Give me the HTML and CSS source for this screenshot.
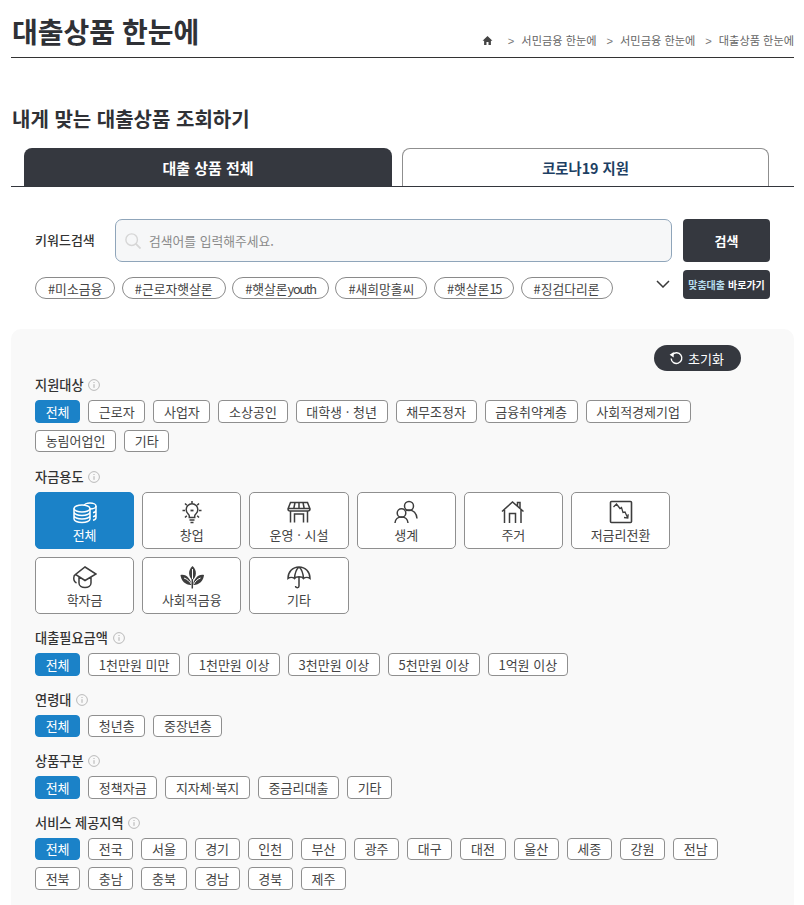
FILE: index.html
```html
<!DOCTYPE html>
<html lang="ko">
<head>
<meta charset="utf-8">
<title>대출상품 한눈에</title>
<link rel="stylesheet" href="styles.css">
</head>
<body>
<svg class="defs" width="0" height="0" aria-hidden="true">
  <symbol id="info" viewBox="0 0 12 12"><circle cx="6" cy="6" r="5.400" fill="none" stroke="#b9b9b9"/><path d="M6 5.200v3.600M6 3v1" stroke="#b0b0b0" fill="none"/></symbol>
</svg>
<div class="page">
  <header class="top">
    <h1 class="title">대출상품 한눈에</h1>
    <nav class="crumbs">
      <svg class="home" viewBox="0 0 12 12"><path d="M6 1 .6 6.200h1.700V11h2.600V7.600h2.200V11h2.600V6.200h1.700z" fill="#444"/></svg>
      <span class="crumb first">서민금융 한눈에</span>
      <span class="crumb">서민금융 한눈에</span>
      <span class="crumb">대출상품 한눈에</span>
    </nav>
  </header>
  <h2 class="subtitle">내게 맞는 대출상품 조회하기</h2>
  <div class="tabs">
    <div class="tab tab-on">대출 상품 전체</div>
    <div class="tab tab-off">코로나19 지원</div>
  </div>
  <section class="search">
    <div class="search-row">
      <div class="search-label">키워드검색</div>
      <div class="search-input">
        <svg class="glass" viewBox="0 0 18 18"><circle cx="7.500" cy="7.500" r="6.500" fill="none" stroke="#d6d6d6" stroke-width="1.600"/><path d="m12 12 5.500 5.500" stroke="#d6d6d6" stroke-width="2"/></svg>
        <span>검색어를 입력해주세요.</span>
      </div>
      <div class="search-btn">검색</div>
    </div>
    <div class="tag-row">
      <div class="tags">
        <span class="tag">#미소금융</span>
        <span class="tag">#근로자햇살론</span>
        <span class="tag">#햇살론<span class="tight">youth</span></span>
        <span class="tag">#새희망홀씨</span>
        <span class="tag">#햇살론<span class="tight">15</span></span>
        <span class="tag">#징검다리론</span>
      </div>
      <svg class="chev" viewBox="0 0 14 8"><path d="m1 1 6 6 6-6" fill="none" stroke="#3a3a3a" stroke-width="1.500"/></svg>
      <div class="fit-btn"><span class="fit-accent">맞춤대출</span> 바로가기</div>
    </div>
  </section>
  <section class="panel">
    <div class="panel-head">
      <div class="reset">
        <svg class="reset-ico" viewBox="0 0 14 14"><path d="M3.200 3.400A5 5 0 1 1 2 7" fill="none" stroke="#fff" stroke-width="1.300"/><path d="M.6 3.600 4.400.9v5.200z" fill="#fff"/></svg>
        <span>초기화</span>
      </div>
    </div>
    <div class="group g1">
      <div class="g-label">지원대상 <svg class="info"><use href="#info"/></svg></div>
      <div class="chips">
        <span class="chip on">전체</span><span class="chip">근로자</span><span class="chip">사업자</span><span class="chip">소상공인</span><span class="chip">대학생 · 청년</span><span class="chip">채무조정자</span><span class="chip">금융취약계층</span><span class="chip">사회적경제기업</span><span class="chip">농림어업인</span><span class="chip">기타</span>
      </div>
    </div>
    <div class="group g-cards">
      <div class="g-label">자금용도 <svg class="info"><use href="#info"/></svg></div>
      <div class="cards">
        <div class="card on">
          <svg class="ico" viewBox="0 0 24 24" fill="none" stroke="currentColor" stroke-width="1.500"><ellipse cx="17" cy="6" rx="6" ry="3"/><path d="M23 6v11.500c0 1.300-1.300 2.300-3 2.700M23 10c0 1.300-1.300 2.300-3 2.700M23 14c0 1.300-1.300 2.300-3 2.700"/><ellipse cx="9" cy="8.500" rx="8" ry="3.500" fill="#1b82c8"/><path d="M1 8.500v10.500c0 2 3.600 3.500 8 3.500s8-1.500 8-3.500V8.500M1 12c0 2 3.600 3.500 8 3.500s8-1.500 8-3.500M1 15.500c0 2 3.600 3.500 8 3.500s8-1.500 8-3.500"/></svg>
          <span>전체</span>
        </div>
        <div class="card">
          <svg class="ico" viewBox="0 0 24 24" fill="none" stroke="currentColor" stroke-width="1.500"><path d="M9.300 17.500v-1.500c0-1-.6-1.500-1.300-2.200a5.800 5.800 0 1 1 8 0c-.7.700-1.300 1.200-1.300 2.200v1.500zM9.500 20h5M10.500 22.500h3"/><path d="M10.500 10.500h3" stroke-width="1.800"/><path d="M12 1v2.500M2.500 10.500H5M19 10.500h2.500M5 3.500l1.800 1.800M19 3.500l-1.800 1.800M5 17.500l1.800-1.800M19 17.500l-1.800-1.800"/></svg>
          <span>창업</span>
        </div>
        <div class="card">
          <svg class="ico" viewBox="0 0 24 24" fill="none" stroke="currentColor" stroke-width="1.500"><path d="M3.500 2.500h17L23 9c0 1.200-1 2-2.200 2H3.200C2 11 1 10.200 1 9zM1 8.500h22M8 2.500 6.800 8.500M12 2.500v6M16 2.500l1.200 6M3.500 11v11.500M20.500 11v11.500M7.500 22.500v-8.500h9v8.500"/></svg>
          <span>운영 · 시설</span>
        </div>
        <div class="card">
          <svg class="ico" viewBox="0 0 24 24" fill="none" stroke="currentColor" stroke-width="1.500"><circle cx="15" cy="6" r="4.500"/><path d="M12 10.500c1-.3 2-.5 3-.5 4.500 0 7.500 3.500 8 8.500"/><circle cx="7.500" cy="13" r="4.300"/><path d="M1 23c.2-3.600 3-6 6.500-6s6.300 2.400 6.500 6"/></svg>
          <span>생계</span>
        </div>
        <div class="card">
          <svg class="ico" viewBox="0 0 24 24" fill="none" stroke="currentColor" stroke-width="1.500"><path d="M1 11.500 11.500 2l11 9.500M3.500 10v13M20 9.500V23M8.500 23V13.500h6V23M16.500 6V2.500h2.500v6"/></svg>
          <span>주거</span>
        </div>
        <div class="card">
          <svg class="ico" viewBox="0 0 24 24" fill="none" stroke="currentColor" stroke-width="1.600"><rect x="1.500" y="1.500" width="21" height="21" rx="1"/><path d="m4.500 7 3-3 3.500 4.500 1.500-1 1.500 5 2-.5 2.500 5.500M15 17.500l3.800.6.400-3.800" stroke-width="1.300"/></svg>
          <span>저금리전환</span>
        </div>
        <div class="card">
          <svg class="ico" viewBox="0 0 24 24" fill="none" stroke="currentColor" stroke-width="1.500"><path d="M12 2 23 9 12 15.500 2.500 9.500zM6 12v6c0 2.800 2.800 4.500 6 4.500s6-1.700 6-4.500v-6M2.500 9.500c-2 1-2 3-1.500 5.500 .3 1.500 1.500 2.500 2.500 3"/></svg>
          <span>학자금</span>
        </div>
        <div class="card">
          <svg class="ico" viewBox="0 0 24 24"><g fill="#3d3d3d"><path d="M12.500 15c-4-3-5-9.500 0-14 5 4.500 4 11 0 14z"/><path d="M11.500 20C6 20.500 1 16 .5 10c5.500-1.500 10.500 4 11 10z"/><path d="M13 20c5.500.5 10.500-4 11-10-5.500-1.500-10.500 4-11 10z"/></g><path d="M12.500 4v11M4 13c3 1 6 3.500 7.500 6.500M20.500 13c-3 1-5.500 3.500-7 6.500" stroke="#fff" stroke-width="1" fill="none"/><path d="M12.300 14v9.500" stroke="#3d3d3d" stroke-width="1.500" fill="none"/></svg>
          <span>사회적금융</span>
        </div>
        <div class="card">
          <svg class="ico" viewBox="0 0 24 24" fill="none" stroke="currentColor" stroke-width="1.500"><path d="M12 2C5.500 2 1 7 1 13.500c1.800-1.500 4.800-1.500 6.500 0 1-1.500 3-1.800 4.500-1.800s3.500.3 4.500 1.800c1.700-1.500 4.700-1.500 6.500 0C23 7 18.500 2 12 2zM12 2C9 4.500 7.800 9 7.500 13.500M12 2c3 2.500 4.200 7 4.500 11.500M12 11.700V21c0 2.300-3.500 2.300-3.500 0"/></svg>
          <span>기타</span>
        </div>
      </div>
    </div>
    <div class="group">
      <div class="g-label">대출필요금액 <svg class="info"><use href="#info"/></svg></div>
      <div class="chips">
        <span class="chip on">전체</span><span class="chip">1천만원 미만</span><span class="chip">1천만원 이상</span><span class="chip">3천만원 이상</span><span class="chip">5천만원 이상</span><span class="chip">1억원 이상</span>
      </div>
    </div>
    <div class="group">
      <div class="g-label">연령대 <svg class="info"><use href="#info"/></svg></div>
      <div class="chips">
        <span class="chip on">전체</span><span class="chip">청년층</span><span class="chip">중장년층</span>
      </div>
    </div>
    <div class="group">
      <div class="g-label">상품구분 <svg class="info"><use href="#info"/></svg></div>
      <div class="chips">
        <span class="chip on">전체</span><span class="chip">정책자금</span><span class="chip">지자체·복지</span><span class="chip">중금리대출</span><span class="chip">기타</span>
      </div>
    </div>
    <div class="group">
      <div class="g-label">서비스 제공지역 <svg class="info"><use href="#info"/></svg></div>
      <div class="chips">
        <span class="chip on">전체</span><span class="chip">전국</span><span class="chip">서울</span><span class="chip">경기</span><span class="chip">인천</span><span class="chip">부산</span><span class="chip">광주</span><span class="chip">대구</span><span class="chip">대전</span><span class="chip">울산</span><span class="chip">세종</span><span class="chip">강원</span><span class="chip">전남</span><span class="chip">전북</span><span class="chip">충남</span><span class="chip">충북</span><span class="chip">경남</span><span class="chip">경북</span><span class="chip">제주</span>
      </div>
    </div>
  </section>
</div>
</body>
</html>
```
FILE: styles.css
```css
* { box-sizing: border-box; }
html, body { margin: 0; padding: 0; height: 905px; overflow: hidden; }
body { background: #fff; color: #333; font-family: "Noto Sans CJK KR", "Noto Sans", sans-serif; font-size: 14px; }
.defs { position: absolute; }
.page { margin-left: 11px; width: 783px; }

.top { height: 58px; border-bottom: 1px solid #333; display: flex; justify-content: space-between; align-items: flex-end; }
.title { margin: 0 0 8px 1px; font-size: 28px; line-height: 36px; font-weight: 700; color: #2f3136; word-spacing: -1px; }
.crumbs { display: flex; align-items: center; height: 20px; margin-bottom: 7px; font-size: 11.200px; color: #666; }
.home { width: 11px; height: 11px; margin-right: 5px; }
.crumb { margin-left: 10px; white-space: nowrap; }
.crumb::before { content: ">"; margin-right: 7px; color: #777; font-family: "Liberation Sans", sans-serif; }

.subtitle { margin: 47px 0 0 1px; font-size: 20px; line-height: 28px; font-weight: 700; color: #2f3136; }

.tabs { margin-top: 15px; display: flex; gap: 10px; padding-left: 13px; border-bottom: 1px solid #33363c; height: 39px; }
.tab { width: 367px; height: 38px; border-radius: 8px 8px 0 0; display: flex; align-items: center; justify-content: center; font-size: 15px; font-weight: 700; }
.tab-on { width: 368px; background: #35383f; color: #fff; }
.tab-off { border: 1px solid #8f8f8f; border-bottom: 0; color: #1d3f63; font-size: 14.300px; }

.search { padding: 32px 24px 0; }
.search-row { display: flex; height: 43px; align-items: center; }
.search-label { width: 80px; font-size: 13px; font-weight: 500; color: #333; margin-top: -3px; }
.search-input { width: 557px; height: 43px; display: flex; align-items: center; gap: 8px; padding-left: 9px; background: #f6f7f8; border: 1px solid #8fa5ba; border-radius: 7px; font-size: 12.800px; color: #8a8a8a; }
.glass { width: 16px; height: 16px; }
.search-btn { margin-left: 11px; width: 87px; height: 43px; background: #35383f; border-radius: 4px; display: flex; align-items: center; justify-content: center; color: #fff; font-size: 13px; font-weight: 700; }

.tag-row { display: flex; margin-top: 8px; height: 29px; }
.tags { display: flex; gap: 6.600px; margin-top: 7px; width: 621px; }
.tag { height: 22px; border: 1px solid #8a8a8a; border-radius: 11px; padding: 0 12px; display: flex; align-items: center; font-size: 12.800px; color: #444; white-space: nowrap; }
.tight { letter-spacing: -1.300px; }
.chev { width: 14px; height: 8px; margin: 10px 0 0 0; }
.fit-btn { margin-left: 13px; width: 87px; height: 29px; background: #35383f; border-radius: 4px; display: flex; align-items: center; justify-content: center; gap: 3px; color: #fff; font-size: 10px; font-weight: 700; white-space: nowrap; }
.fit-accent { color: #b5dcec; }

.panel { margin-top: 30px; background: #f9f9f9; border-radius: 10px 10px 0 0; padding: 16px 24px 20px; height: 600px; }
.panel-head { display: flex; justify-content: flex-end; padding-right: 29px; height: 26px; }
.reset { width: 87px; height: 26px; padding-right: 2px; background: #35383f; border-radius: 13px; display: flex; align-items: center; justify-content: center; gap: 4px; color: #fff; font-size: 13px; }
.reset-ico { width: 15px; height: 15px; }

.group { margin-top: 14px; }
.g1 { margin-top: 4px; }
.g-cards { margin-top: 15px; margin-bottom: 14.500px; }
.g-label { height: 20px; line-height: 20px; font-size: 13.200px; font-weight: 500; color: #333; display: flex; align-items: center; gap: 1px; white-space: pre; }
.info { width: 12px; height: 12px; }
.chips { display: flex; flex-wrap: wrap; gap: 7px 8px; margin-top: 5px; width: 700px; }
.chip { height: 22.500px; padding: 0 9.640px; border: 1px solid #8f8f8f; border-radius: 4px; background: #fff; display: flex; align-items: center; font-size: 13px; color: #444; white-space: nowrap; }
.chip.on { background: #1b82c8; border-color: #1b82c8; color: #fff; }

.cards { display: flex; flex-wrap: wrap; gap: 7.500px 8px; margin-top: 5px; width: 700px; }
.card { width: 99.200px; height: 57px; border: 1px solid #8f8f8f; border-radius: 5px; background: #fff; display: flex; flex-direction: column; align-items: center; padding-top: 7px; font-size: 13px; line-height: 20px; color: #444; }
.card span { margin-top: 1px; }
.card.on { background: #1b82c8; border-color: #1b82c8; color: #fff; }
.ico { width: 24px; height: 24px; flex: none; color: #3d3d3d; }
.card.on .ico { color: #fff; }
```
